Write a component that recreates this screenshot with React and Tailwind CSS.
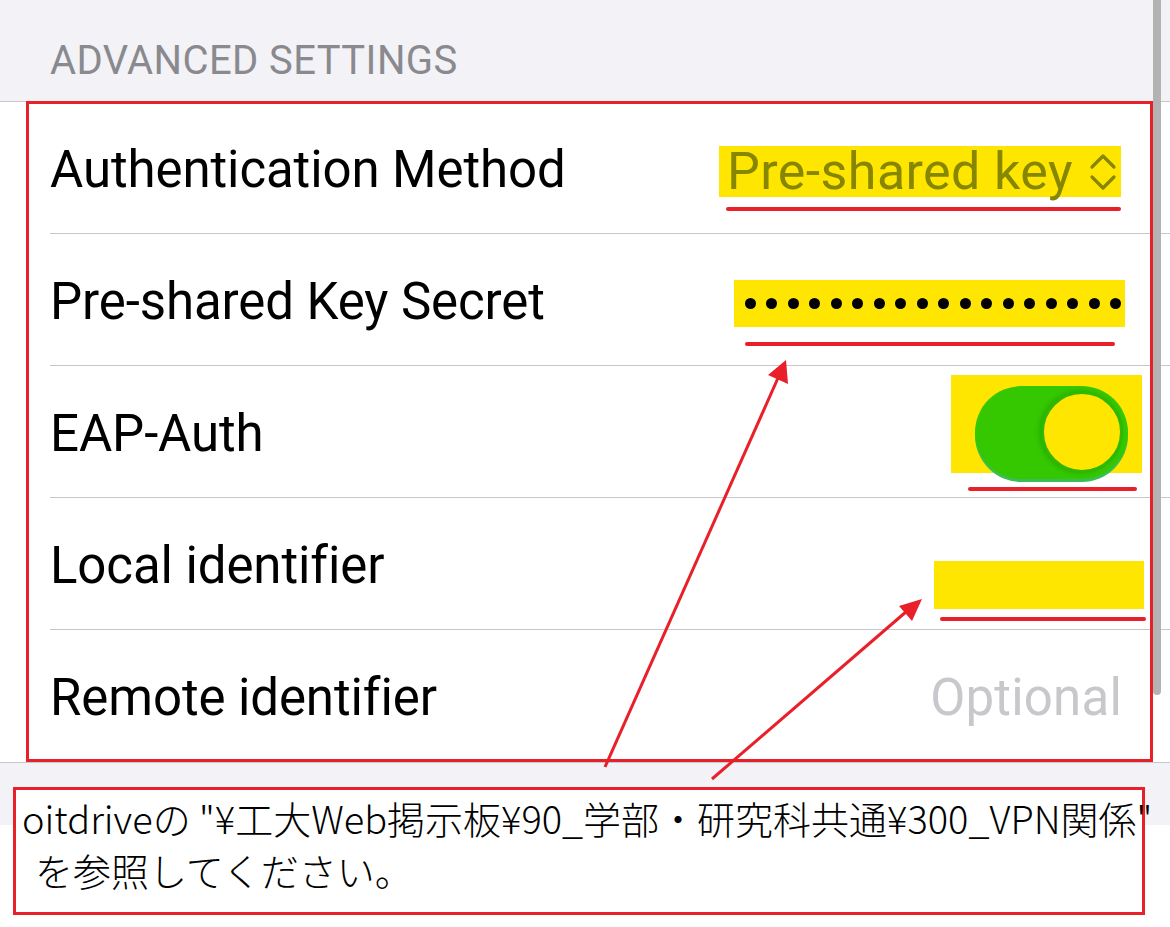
import React from "react";

const RED = "#e8202a";

function Underline({ className }) {
  return <div className={`absolute h-[4px] rounded-full bg-[#e8202a] ${className}`} />;
}

function Row({ label, children, last }) {
  return (
    <div className="pl-[50px]">
      <div className={`relative flex h-[132px] items-center ${last ? "" : "border-b border-[#c8c7cc]"}`}>
        <span className="mt-[5px] text-[51px] text-black tracking-[-0.1px]">{label}</span>
        {children}
      </div>
    </div>
  );
}

function UpDown() {
  return (
    <svg width="28" height="42" viewBox="0 0 28 42" fill="none" className="ml-[16px]">
      <path d="M3 16L14 5l11 11" stroke="#868600" strokeWidth="3.2" strokeLinecap="round" strokeLinejoin="round" />
      <path d="M3 26l11 11 11-11" stroke="#868600" strokeWidth="3.2" strokeLinecap="round" strokeLinejoin="round" />
    </svg>
  );
}

export default function App() {
  const dots = Array.from({ length: 18 });

  return (
    <div
      className="relative w-[1170px] h-[927px] overflow-hidden bg-[#f2f2f7]"
      style={{ fontFamily: "Roboto, 'Noto Sans CJK JP', sans-serif" }}
    >
      {/* Section header */}
      <div className="h-[101px] pl-[50px] pt-[38px] text-[40px] leading-[46px] text-[#8a8a8e] tracking-[0.4px]">
        ADVANCED SETTINGS
      </div>

      {/* List */}
      <div className="bg-white border-t border-b border-[#c8c7cc]">
        <Row label="Authentication Method">
          <div className="relative ml-auto mr-[49px] self-start mt-[44px] flex h-[51px] items-center bg-[#ffe600] pl-[8px] pr-[4px]">
            <span className="text-[52px] leading-none text-[#868600] tracking-[0.4px]">Pre-shared key</span>
            <UpDown />
            <Underline className="left-[7px] right-0 -bottom-[14px]" />
          </div>
        </Row>
        <Row label="Pre-shared Key Secret">
          <div className="relative ml-auto mr-[45px] self-start mt-[46px] flex h-[47px] w-[391px] items-center justify-between bg-[#ffe600] pl-[11px] pr-[4px]">
            {dots.map((_, i) => (
              <span key={i} className="block h-[11px] w-[11px] rounded-full bg-black" />
            ))}
            <Underline className="left-[11px] right-[10px] -bottom-[19px]" />
          </div>
        </Row>
        <Row label="EAP-Auth">
          <div className="relative ml-auto mr-[28px] self-start mt-[9px] h-[98px] w-[191px] bg-[#ffe600]">
            <div className="absolute left-[24px] top-[11px] h-[93px] w-[153px] rounded-full bg-[#35c800] shadow-[0_3px_0_#3bbd55]">
              <div className="absolute right-[5px] top-[5px] h-[82px] w-[82px] rounded-full border-[3px] border-[#2fb800] bg-[#ffe600] shadow-[-2px_0_5px_rgba(0,90,0,0.25)]" />
            </div>
            <Underline className="left-[17px] right-[5px] -bottom-[18px]" />
          </div>
        </Row>
        <Row label="Local identifier">
          <div className="relative ml-auto mr-[26px] self-start mt-[63px] h-[48px] w-[210px] bg-[#ffe600]">
            <Underline className="left-[6px] -right-[2px] -bottom-[12px]" />
          </div>
        </Row>
        <Row label="Remote identifier" last>
          <span className="ml-auto mr-[48px] mt-[5px] text-[51px] text-[#c7c7cc] tracking-[0.2px]">Optional</span>
        </Row>
      </div>

      <div className="h-[62px]" />
      <div className="h-[110px] bg-white" />

      {/* Scroll indicator */}
      <div className="absolute left-[1153px] top-0 h-[695px] w-[8px] rounded-b-full bg-[#b3b3b3]" />

      {/* Annotation: red frame round list */}
      <div className="absolute left-[26px] top-[101px] h-[661px] w-[1127px] border-[3px] border-[#e8202a]" />

      {/* Annotation arrows */}
      <svg className="absolute left-0 top-0" width="1170" height="927" viewBox="0 0 1170 927" fill="none">
        <line x1="605" y1="767" x2="778" y2="378" stroke={RED} strokeWidth="3" />
        <polygon points="786,360 788,384 768,375" fill={RED} />
        <line x1="712" y1="779" x2="907" y2="611" stroke={RED} strokeWidth="3" />
        <polygon points="922,599 912,621 899,606" fill={RED} />
      </svg>

      {/* Annotation: note */}
      <div
        className="absolute left-[13px] top-[787px] h-[128px] w-[1132px] border-[3px] border-[#e8202a] bg-white pl-[6px] pt-[2px] text-[38px] leading-[52px] font-light text-black"
        style={{ fontFamily: "'Noto Sans CJK JP', sans-serif" }}
      >
        <div className="whitespace-nowrap">oitdriveの "¥工大Web掲示板¥90_学部・研究科共通¥300_VPN関係"</div>
        <div className="whitespace-nowrap pl-[13px]">を参照してください。</div>
      </div>
    </div>
  );
}
